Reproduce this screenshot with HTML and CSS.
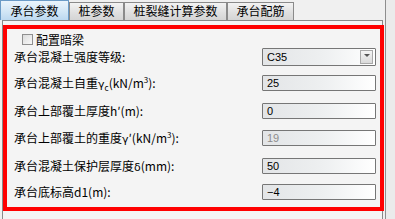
FILE: index.html
```html
<!DOCTYPE html>
<html lang="zh-CN">
<head>
    <meta charset="UTF-8">
    <title>承台参数</title>
    <link rel="stylesheet" href="styles.css">
</head>
<body>

    <div class="window">
        <div class="tabs">
            <div class="tab active" style="width: 69px">承台参数</div>
            <div class="tab" style="width: 55px">桩参数</div>
            <div class="tab" style="width: 103px">桩裂缝计算参数</div>
            <div class="tab" style="width: 67px">承台配筋</div>
        </div>

        <div class="panel">
            <div class="highlight">
                <label class="check-row">
                    <span class="checkbox"></span>
                    <span>配置暗梁</span>
                </label>

                <div class="form-grid">
                    <div class="label">承台混凝土强度等级:</div>
                    <div class="combo">
                        <span>C35</span>
                        <span class="combo-btn"><span class="arrow"></span></span>
                    </div>

                    <div class="label">承台混凝土自重<span class="greek">γ</span><sub>c</sub>(kN/m<sup>3</sup>):</div>
                    <div class="field">25</div>

                    <div class="label">承台上部覆土厚度h′(m):</div>
                    <div class="field">0</div>

                    <div class="label">承台上部覆土的重度<span class="greek">γ</span>′(kN/m<sup>3</sup>):</div>
                    <div class="field disabled">19</div>

                    <div class="label">承台混凝土保护层厚度<span class="greek">δ</span>(mm):</div>
                    <div class="field">50</div>

                    <div class="label">承台底标高d1(m):</div>
                    <div class="field">−4</div>
                </div>
            </div>
        </div>
    </div>

</body>
</html>
```

FILE: styles.css
```css
body {
    margin: 0;
    height: 219px;
    overflow: hidden;
    background: #ebebeb;
    font-family: "Noto Sans CJK SC", "Liberation Sans", sans-serif;
    font-size: 12px;
    color: #000;
}

.window {
    width: 385px;
    height: 219px;
    border-right: 1px solid #8e8e8e;
    background: #f0f0f0;
}

.tabs {
    display: flex;
    align-items: flex-end;
    height: 20px;
}

.tab {
    box-sizing: border-box;
    height: 18px;
    line-height: 16px;
    text-align: center;
    border: 1px solid #8a8a8a;
    border-bottom: none;
    background: linear-gradient(#f3f3f3, #e0e0e0 55%, #d4d4d4);
}

.tab.active {
    height: 20px;
    line-height: 19px;
    border-color: #6b9bc7;
    background: linear-gradient(#eaf4fc, #d2e6f6 55%, #bcd8f0);
}

.panel {
    box-sizing: border-box;
    width: 381px;
    height: 199px;
    margin-left: 2px;
    border: 1px solid #898989;
    border-bottom: none;
    background: #f4f4f4;
    padding-top: 4px;
}

.highlight {
    box-sizing: border-box;
    height: 186px;
    margin-right: -2px;
    border: 4px solid #ff0000;
    padding: 0 4px 0 7px;
}

.check-row {
    display: flex;
    align-items: center;
    gap: 3px;
    height: 18px;
    padding-left: 8px;
    padding-top: 1px;
}

.checkbox {
    box-sizing: border-box;
    width: 11px;
    height: 11px;
    border: 1px solid #8f8f8f;
    background: linear-gradient(135deg, #dcdcdc, #f8f8f8);
}

.form-grid {
    display: grid;
    grid-template-columns: 1fr 114px;
    grid-template-rows: 27px 28px 27px 28px 26px 16px;
    align-items: start;
}

.label {
    line-height: 16px;
    white-space: nowrap;
}

.form-grid .label:first-child {
    line-height: 18px;
}

.greek {
    font-family: "DejaVu Sans", sans-serif;
    font-size: 11px;
}

sub, sup {
    font-size: 8px;
    line-height: 0;
}

.field, .combo {
    box-sizing: border-box;
    height: 16px;
    line-height: 14px;
    padding-left: 4px;
    border: 1px solid #767676;
    border-radius: 1px;
    background: linear-gradient(90deg, #e3e5e7, #eef0f1 55%, #ffffff);
    font-family: "Liberation Sans", sans-serif;
    font-size: 11px;
}

.field.disabled {
    color: #8d8d8d;
}

.combo {
    display: flex;
    align-items: center;
    justify-content: space-between;
    height: 18px;
    padding-right: 2px;
}

.combo-btn {
    box-sizing: border-box;
    width: 13px;
    height: 14px;
    border: 1px solid #a9a9a9;
    background: linear-gradient(#f4f4f4, #dadada);
    display: flex;
    justify-content: center;
    padding-top: 3px;
}

.arrow {
    width: 0;
    height: 0;
    border-left: 3px solid transparent;
    border-right: 3px solid transparent;
    border-top: 3px solid #555;
}
```
